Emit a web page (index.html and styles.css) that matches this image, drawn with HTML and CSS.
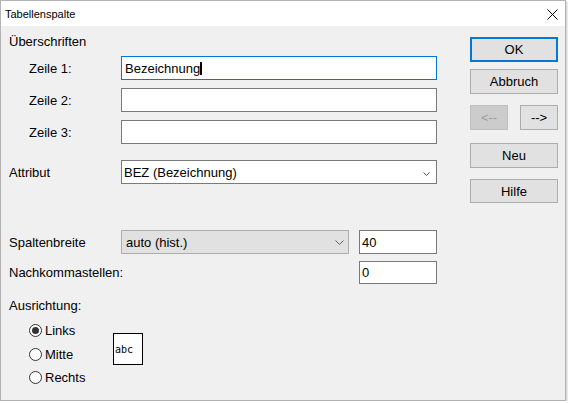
FILE: index.html
```
<!DOCTYPE html>
<html lang="de">
<head>
  <meta charset="UTF-8">
  <title>Tabellenspalte</title>
  <link rel="stylesheet" href="styles.css">
</head>
<body>
  <div class="window">
    <div class="titlebar">
      <span class="title">Tabellenspalte</span>
      <span class="close">
        <svg width="11" height="11" viewBox="0 0 11 11"><path d="M0.5 0.5 L10.5 10.5 M10.5 0.5 L0.5 10.5" stroke="#000" stroke-width="1" fill="none"/></svg>
      </span>
    </div>

    <div class="dialog">
      <div class="form">
        <div class="group-label">Überschriften</div>

        <div class="row row-first indent">
          <label>Zeile 1:</label>
          <div class="edit wide focused">Bezeichnung<span class="caret"></span></div>
        </div>
        <div class="row row-next indent">
          <label>Zeile 2:</label>
          <div class="edit wide"></div>
        </div>
        <div class="row row-next indent">
          <label>Zeile 3:</label>
          <div class="edit wide"></div>
        </div>

        <div class="row row-attr">
          <label>Attribut</label>
          <div class="combo combo-white">
            <span>BEZ (Bezeichnung)</span>
            <svg width="7" height="4" viewBox="0 0 7 4"><path d="M0.5 0.5 L3.5 3.5 L6.5 0.5" stroke="#555" stroke-width="1" fill="none"/></svg>
          </div>
        </div>

        <div class="row row-width">
          <label>Spaltenbreite</label>
          <div class="combo combo-gray">
            <span>auto (hist.)</span>
            <svg width="9" height="5" viewBox="0 0 9 5"><path d="M0.5 0.5 L4.5 4.5 L8.5 0.5" stroke="#606060" stroke-width="1" fill="none"/></svg>
          </div>
          <div class="edit small">40</div>
        </div>
        <div class="row row-decimals">
          <label class="grow">Nachkommastellen:</label>
          <div class="edit small">0</div>
        </div>

        <div class="group-label align-label">Ausrichtung:</div>
        <div class="align">
          <div class="radios">
            <div class="radio checked"><span class="dot"></span>Links</div>
            <div class="radio"><span class="dot"></span>Mitte</div>
            <div class="radio"><span class="dot"></span>Rechts</div>
          </div>
          <div class="preview">abc</div>
        </div>
      </div>

      <div class="buttons">
        <button class="btn btn-default">OK</button>
        <button class="btn btn-cancel">Abbruch</button>
        <div class="nav">
          <button class="btn btn-small" disabled>&lt;--</button>
          <button class="btn btn-small">--&gt;</button>
        </div>
        <button class="btn btn-new">Neu</button>
        <button class="btn btn-help">Hilfe</button>
      </div>
    </div>
  </div>
</body>
</html>
```

FILE: styles.css
```
body {
  margin: 0;
  background-color: #fff;
  font-family: "Liberation Sans", Arial, sans-serif;
  font-size: 13px;
  color: #000;
}

.window {
  width: 566px;
  height: 401px;
  box-sizing: border-box;
  border: 1px solid #b4b4b4;
  background-color: #f0f0f0;
  box-shadow: 1px 1px 0 #d6d6d6, 2px 2px 0 #ececec;
  display: flex;
  flex-direction: column;
}

.titlebar {
  height: 25px;
  background-color: #fff;
  display: flex;
  align-items: center;
  justify-content: space-between;
  padding: 0 7px 0 4px;
}

.title {
  font-size: 11px;
  margin-top: 1px;
}

.close {
  display: flex;
  margin-top: 2px;
}

.dialog {
  flex: 1;
  display: flex;
  padding: 0 7px 0 8px;
}

/* left side: labels and fields */
.form {
  width: 428px;
  padding-top: 8px;
}

.group-label {
  height: 16px;
  line-height: 16px;
}

.row {
  display: flex;
  align-items: center;
  height: 24px;
}

.row label {
  width: 112px;
  box-sizing: border-box;
}

.row.indent label {
  padding-left: 20px;
}

.row label.grow {
  flex: 1;
}

.row-first { margin-top: 6px; }
.row-next { margin-top: 8px; }
.row-attr { margin-top: 16px; }
.row-width { margin-top: 46px; }
.row-decimals { margin-top: 7px; height: 23px; }
.align-label { margin-top: 14px; }

.edit {
  height: 100%;
  box-sizing: border-box;
  border: 1px solid #7a7a7a;
  background-color: #fff;
  padding: 0 3px;
  display: flex;
  align-items: center;
}

.edit.wide {
  width: 316px;
}

.edit.small {
  width: 78px;
  padding-left: 2px;
}

.edit.focused {
  border-color: #0078d7;
}

.caret {
  display: inline-block;
  width: 2px;
  height: 13px;
  background-color: #000;
}

.combo {
  height: 100%;
  box-sizing: border-box;
  display: flex;
  align-items: center;
  justify-content: space-between;
}

.combo-white {
  width: 316px;
  border: 1px solid #7a7a7a;
  background-color: #fff;
  padding: 0 6px 0 2px;
}

.combo-white svg {
  margin-top: 3px;
}

.combo-gray {
  width: 228px;
  border: 1px solid #adadad;
  background-color: #e1e1e1;
  padding: 0 4px 0 4px;
  margin-right: 10px;
}

/* alignment radios with sample box */
.align {
  display: flex;
  align-items: flex-start;
  margin-top: 5px;
  padding-left: 20px;
}

.radios {
  width: 84px;
}

.radio {
  height: 23.5px;
  display: flex;
  align-items: center;
  gap: 3px;
}

.dot {
  width: 13px;
  height: 13px;
  box-sizing: border-box;
  border: 1px solid #333;
  border-radius: 50%;
  background-color: #fff;
  display: flex;
  align-items: center;
  justify-content: center;
}

.radio.checked .dot::after {
  content: "";
  width: 7px;
  height: 7px;
  border-radius: 50%;
  background-color: #333;
}

.preview {
  margin-top: 14px;
  width: 30px;
  height: 32px;
  box-sizing: border-box;
  border: 1px solid #000;
  background-color: #fff;
  display: flex;
  align-items: center;
  padding-left: 1px;
  font-family: "DejaVu Sans Mono", monospace;
  font-size: 10px;
}

/* right side: command buttons */
.buttons {
  width: 88px;
  margin-left: 33px;
  padding-top: 11px;
  display: flex;
  flex-direction: column;
}

.btn {
  height: 25px;
  box-sizing: border-box;
  border: 1px solid #adadad;
  background-color: #e1e1e1;
  font-family: inherit;
  font-size: 13px;
  color: #000;
  padding: 0;
}

.btn-default {
  border: 2px solid #0078d7;
}

.btn-cancel { margin-top: 7px; }
.btn-new { margin-top: 13px; }
.btn-help { margin-top: 11px; height: 24px; }

.nav {
  display: flex;
  justify-content: space-between;
  margin-top: 11px;
}

.btn-small {
  width: 38px;
}

.btn:disabled {
  background-color: #cccccc;
  border-color: #bfbfbf;
  color: #a0a0a0;
}
```
